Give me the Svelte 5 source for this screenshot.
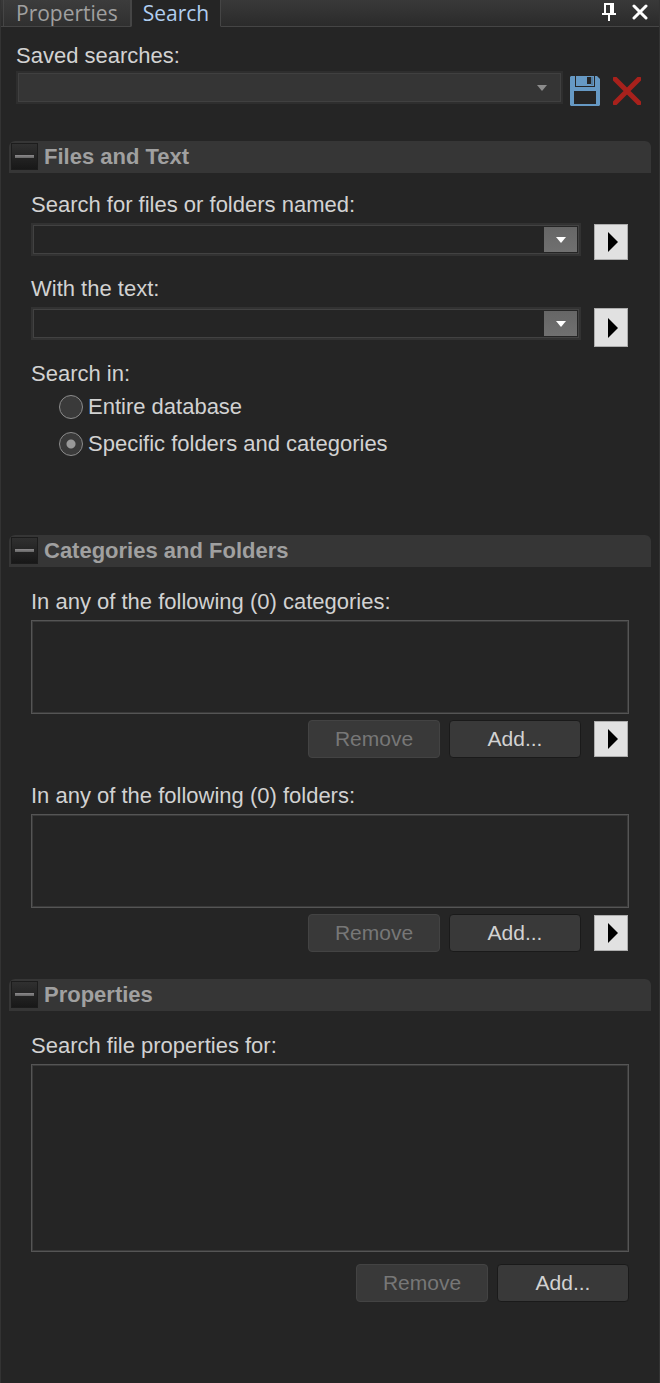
<script lang="ts">
	let scope = $state('specific');
	let fileName = $state('');
	let withText = $state('');
	let open = $state({ files: true, categories: true, properties: true });
</script>

{#snippet sectionHeader(key: 'files' | 'categories' | 'properties', title: string)}
	<header class="section-header">
		<button
			class="toggle"
			type="button"
			aria-label="Toggle {title}"
			aria-expanded={open[key]}
			onclick={() => (open[key] = !open[key])}
		>
			<span class="dash"></span>
		</button>
		<h2>{title}</h2>
	</header>
{/snippet}

{#snippet moreButton(label: string)}
	<button class="more" type="button" aria-label={label}>
		<svg width="10" height="20" viewBox="0 0 10 20" aria-hidden="true">
			<path d="M0 0L10 10L0 20Z" fill="#000" />
		</svg>
	</button>
{/snippet}

{#snippet listButtons()}
	<button class="button" type="button" disabled>Remove</button>
	<button class="button" type="button">Add...</button>
{/snippet}

<div class="panel">
	<div class="tabbar">
		<div class="tabs" role="tablist">
			<button class="tab" type="button" role="tab" aria-selected="false">Properties</button>
			<button class="tab active" type="button" role="tab" aria-selected="true">Search</button>
		</div>
		<div class="window-buttons">
			<button class="icon" type="button" aria-label="Pin panel">
				<svg width="14" height="18" viewBox="0 0 14 18" aria-hidden="true">
					<path d="M2 0H12V10H14V12H8V18H6V12H0V10H2ZM4 2V10H8V2Z" fill="#fff" fill-rule="evenodd" />
				</svg>
			</button>
			<button class="icon" type="button" aria-label="Close panel">
				<svg width="16" height="16" viewBox="0 0 16 16" aria-hidden="true">
					<path d="M2 2L14 14M14 2L2 14" stroke="#fff" stroke-width="3" stroke-linecap="round" />
				</svg>
			</button>
		</div>
	</div>

	<div class="saved">
		<label for="saved">Saved searches:</label>
		<div class="saved-row">
			<div class="saved-select">
				<select id="saved"><option value=""></option></select>
				<svg width="10" height="6" viewBox="0 0 10 6" aria-hidden="true">
					<path d="M0 0H10L5 6Z" fill="#8c8c8c" />
				</svg>
			</div>
			<button class="icon save" type="button" aria-label="Save search">
				<svg width="30" height="30" viewBox="0 0 30 30" aria-hidden="true">
					<path d="M1 0H27L30 3V29L29 30H1L0 29V1Z" fill="#6699c4" />
					<path d="M5 0V11H25V0H24V10H6V0Z" fill="#252525" />
					<path d="M17 1H21V8H17Z" fill="#252525" />
					<path d="M22 1V9" stroke="#45627c" />
					<path d="M4 15H26V28H4Z" fill="#252525" />
				</svg>
			</button>
			<button class="icon delete" type="button" aria-label="Delete search">
				<svg width="28" height="28" viewBox="0 0 28 28" aria-hidden="true">
					<path d="M2 2L26 26M26 2L2 26" stroke="#a8211c" stroke-width="5" stroke-linecap="round" />
				</svg>
			</button>
		</div>
	</div>

	<section class="files">
		{@render sectionHeader('files', 'Files and Text')}
		{#if open.files}
			<div class="body">
				<label for="file-name">Search for files or folders named:</label>
				<div class="field-row">
					<div class="combo">
						<input id="file-name" type="text" bind:value={fileName} />
						<button class="drop" type="button" aria-label="Recent names">
							<svg width="10" height="6" viewBox="0 0 10 6" aria-hidden="true">
								<path d="M0 0H10L5 6Z" fill="#fff" />
							</svg>
						</button>
					</div>
					{@render moreButton('Name options')}
				</div>

				<label for="with-text">With the text:</label>
				<div class="field-row tall">
					<div class="combo">
						<input id="with-text" type="text" bind:value={withText} />
						<button class="drop" type="button" aria-label="Recent texts">
							<svg width="10" height="6" viewBox="0 0 10 6" aria-hidden="true">
								<path d="M0 0H10L5 6Z" fill="#fff" />
							</svg>
						</button>
					</div>
					{@render moreButton('Text options')}
				</div>

				<fieldset>
					<legend>Search in:</legend>
					<label class="radio">
						<input type="radio" name="scope" value="all" bind:group={scope} />
						Entire database
					</label>
					<label class="radio">
						<input type="radio" name="scope" value="specific" bind:group={scope} />
						Specific folders and categories
					</label>
				</fieldset>
			</div>
		{/if}
	</section>

	<section>
		{@render sectionHeader('categories', 'Categories and Folders')}
		{#if open.categories}
			<div class="body">
				<label for="categories">In any of the following (0) categories:</label>
				<select class="list" id="categories" multiple></select>
				<div class="actions">
					{@render listButtons()}
					{@render moreButton('Category options')}
				</div>

				<label for="folders">In any of the following (0) folders:</label>
				<select class="list" id="folders" multiple></select>
				<div class="actions">
					{@render listButtons()}
					{@render moreButton('Folder options')}
				</div>
			</div>
		{/if}
	</section>

	<section class="properties">
		{@render sectionHeader('properties', 'Properties')}
		{#if open.properties}
			<div class="body">
				<label for="file-properties">Search file properties for:</label>
				<select class="list" id="file-properties" multiple></select>
				<div class="actions">
					{@render listButtons()}
				</div>
			</div>
		{/if}
	</section>
</div>

<style>
	:global(body) {
		margin: 0;
		background: #252525;
	}

	.panel {
		box-sizing: border-box;
		min-height: 100vh;
		border: solid #333;
		border-width: 0 1px;
		background: #252525;
		color: #d2d2d2;
		font: 22px/24px 'Liberation Sans', Arial, sans-serif;
	}

	button,
	input,
	select {
		box-sizing: border-box;
		margin: 0;
		padding: 0;
		border: 0;
		border-radius: 0;
		appearance: none;
		background: none;
		color: inherit;
		font: inherit;
	}

	svg {
		display: block;
	}

	label,
	legend {
		display: block;
		padding: 0;
	}

	.tabbar {
		display: flex;
		justify-content: space-between;
		height: 27px;
		background: linear-gradient(#393939, #2a2a2a);
		box-shadow: inset 0 -1px #454545;
	}

	.tabs {
		display: flex;
		padding-left: 2px;
	}

	.tab {
		padding: 0 12px;
		border: solid #454545;
		border-width: 0 1px 1px;
		background: linear-gradient(#3c3c3c, #303030);
		color: #a0a0a0;
		font: 21px/26px 'Open Sans', 'Segoe UI', sans-serif;

		&.active {
			padding: 0 11px;
			border-bottom-color: #252525;
			background: #252525;
			color: #b0cdf0;
		}
	}

	.window-buttons {
		display: flex;
		align-items: center;
		gap: 16px;
		padding: 0 11px 3px 0;
	}

	.saved {
		padding: 17px 18px 0 15px;
	}

	.saved-row {
		display: flex;
		margin-top: 3px;
	}

	.saved-select {
		display: grid;
		flex: 1;
		align-items: center;
		height: 33px;

		select {
			grid-area: 1 / 1;
			width: 100%;
			height: 33px;
			border: 2px solid #2e2e2e;
			outline: 1px solid #404040;
			outline-offset: -3px;
			background: #353535;
		}

		svg {
			grid-area: 1 / 1;
			justify-self: end;
			margin-right: 16px;
			pointer-events: none;
		}
	}

	.save {
		margin: 5px 0 0 7px;
	}

	.delete {
		margin: 5px 0 0 13px;
	}

	section {
		margin: 27px 8px 0;
	}

	.files {
		margin-top: 35px;
	}

	.section-header {
		display: flex;
		align-items: flex-start;
		gap: 6px;
		box-sizing: border-box;
		height: 32px;
		padding: 2px 0 0 2px;
		border-radius: 6px 6px 0 0;
		background: #363636;

		h2 {
			margin: 0;
			color: #a0a0a0;
			font-size: 22px;
			line-height: 28px;
		}
	}

	.toggle {
		width: 27px;
		height: 27px;
		padding: 0 3px;
		border: 1px solid #1c1c1c;
		background: linear-gradient(#303030, #181818);
	}

	.dash {
		display: block;
		height: 3px;
		background: linear-gradient(#8c8a8c, #666);
	}

	.body {
		padding: 23px 22px 0;
	}

	.files .body {
		padding: 20px 22px 52px;
	}

	.field-row {
		display: flex;
		align-items: flex-start;
		gap: 13px;
		margin: 6px 1px 17px 0;

		.more {
			margin-top: 1px;
		}

		&.tall {
			margin-bottom: 15px;
		}

		&.tall .more {
			height: 39px;
		}
	}

	.combo {
		display: flex;
		flex: 1;
		box-sizing: border-box;
		height: 33px;
		padding: 2px;
		border: 2px solid #323232;
		outline: 1px solid #424242;
		outline-offset: -3px;

		input {
			flex: 1;
			min-width: 0;
			padding: 0 4px;
			outline: none;
		}
	}

	.drop {
		display: grid;
		place-items: center;
		width: 33px;
		background: linear-gradient(#666, #707070);
	}

	.more {
		display: grid;
		place-items: center;
		width: 34px;
		height: 36px;
		padding-left: 3px;
		border: 1px solid #adadad;
		background: #e1e1e1;
	}

	fieldset {
		margin: 0;
		padding: 0;
		border: 0;
	}

	.radio {
		display: flex;
		align-items: center;
		gap: 5px;
		margin: 13px 0 0 28px;

		input {
			width: 24px;
			height: 24px;
			border: 1px solid #8c8c8c;
			border-radius: 50%;
			background: #3a3a3a;
		}

		input:checked {
			background: radial-gradient(circle, #999 4px, #3a3a3a 5px);
		}
	}

	legend + .radio {
		margin-top: 9px;
	}

	.list {
		display: block;
		width: 100%;
		height: 94px;
		margin-top: 6px;
		border: 1px solid #555;
		box-shadow: inset 0 0 0 1px #3a3a3a;
	}

	.actions {
		display: flex;
		justify-content: flex-end;
		align-items: center;
		gap: 9px;
		margin-top: 6px;

		.more {
			margin: 0 1px 0 4px;
		}

		& + label {
			margin-top: 26px;
		}
	}

	.button {
		width: 132px;
		height: 38px;
		border: 1px solid #1a1a1a;
		border-radius: 4px;
		background: #393939;
		font-size: 21px;

		&:disabled {
			border-color: #434343;
			color: #777;
		}
	}

	.properties {
		.list {
			height: 188px;
		}

		.actions {
			margin-top: 12px;
		}
	}
</style>
